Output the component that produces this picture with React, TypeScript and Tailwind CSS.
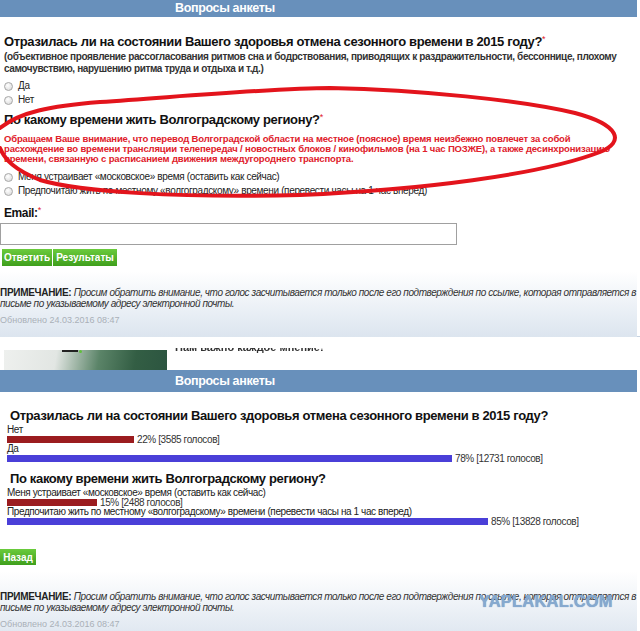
import React from 'react';

const red = 'text-[#e0202a]';

const Radio = ({ label }: { label: string }) => (
  <div className="flex items-center h-[14px] text-[10px] tracking-[-0.35px] leading-[14px] text-[#222]">
    <span className="ml-[4px] mr-[5px] w-[9px] h-[9px] rounded-full border border-[#a8a8a8] bg-[radial-gradient(circle_at_40%_35%,#ffffff_0%,#e2e2e2_70%,#cfcfcf_100%)]" />
    <span>{label}</span>
  </div>
);

const Bar = ({ pct, votes, color, width }: { pct: number; votes: number; color: string; width: number }) => (
  <div className="flex items-center h-[7px] mt-[1px]">
    <div className={`h-[7px] ml-[7px] ${color}`} style={{ width }} />
    <span className="ml-[3px] text-[10px] tracking-[-0.4px] leading-none text-[#333]">
      {pct}% [{votes} голосов]
    </span>
  </div>
);

const ResultOption = ({ label, ...bar }: { label: string; pct: number; votes: number; color: string; width: number }) => (
  <div className="mt-[1px]">
    <div className="pl-[7px] text-[10px] tracking-[-0.4px] leading-[10px] text-[#222]">{label}</div>
    <Bar {...bar} />
  </div>
);

const Header = ({ h }: { h: string }) => (
  <div className={`w-[637px] ${h} bg-[#6890bb] flex items-center pl-[175px] text-white font-bold text-[12.5px] tracking-[-0.35px]`}>
    Вопросы анкеты
  </div>
);

const Note = ({ top }: { top: string }) => (
  <div className={`w-[637px] bg-gradient-to-b from-white to-[#dce5ef] ${top}`}>
    <p className="w-[640px] text-[10px] leading-[10.5px] tracking-[-0.42px] text-[#333] italic">
      <b className="not-italic text-[#222] tracking-[-0.3px]">ПРИМЕЧАНИЕ:</b> Просим обратить внимание, что голос
      засчитывается только после его подтверждения по ссылке, которая отправляется в письме по указываемому адресу
      электронной почты.
    </p>
    <p className="mt-[5px] text-[9px] leading-[12px] text-[#aab0b8] pb-[11px]">Обновлено 24.03.2016 08:47</p>
  </div>
);

const Title = ({ children, cls }: { children: React.ReactNode; cls: string }) => (
  <h2 className={`${cls} text-[13px] leading-[16px] tracking-[-0.35px] font-bold text-[#111]`}>{children}</h2>
);

const Star = () => <sup className="text-[#e0202a] text-[9px] font-normal">*</sup>;

export default function App() {
  return (
    <div className="relative w-[640px] h-[631px] overflow-hidden bg-white font-['Liberation_Sans',Arial,sans-serif]">
      {/* poll form */}
      <section className="relative h-[337px] border-b border-[#c5d2e1]">
        <Header h="h-[17px]" />
        <Title cls="mt-[17px] pl-[4px]">
          Отразилась ли на состоянии Вашего здоровья отмена сезонного времени в 2015 году?
          <Star />
        </Title>
        <p className="mt-[1px] pl-[4px] text-[10px] leading-[12px] tracking-[-0.38px] font-bold text-[#333]">
          (объективное проявление рассогласования ритмов сна и бодрствования, приводящих к раздражительности, бессоннице,
          плохому самочувствию, нарушению ритма труда и отдыха и т.д.)
        </p>
        <div className="mt-[4px]">
          <Radio label="Да" />
          <Radio label="Нет" />
        </div>
        <Title cls="mt-[5px] pl-[4px]">
          По какому времени жить Волгоградскому региону?
          <Star />
        </Title>
        <p className={`mt-[6px] pl-[4px] w-[622px] text-[9.5px] leading-[10px] tracking-[-0.15px] font-bold ${red}`}>
          Обращаем Ваше внимание, что перевод Волгоградской области на местное (поясное) время неизбежно повлечет за собой
          расхождение во времени трансляции телепередач / новостных блоков / кинофильмов (на 1 час ПОЗЖЕ), а также
          десинхронизацию времени, связанную с расписанием движения междугороднего транспорта.
        </p>
        <div className="mt-[6px]">
          <Radio label="Меня устраивает «московское» время (оставить как сейчас)" />
          <Radio label="Предпочитаю жить по местному «волгоградскому» времени (перевести часы на 1 час вперед)" />
        </div>
        <div className="mt-[8px] pl-[4px] text-[12px] leading-[14px] tracking-[-0.4px] font-bold text-[#111]">
          Email:<Star />
        </div>
        <input className="mt-[3px] block w-[457px] h-[22px] border border-[#a0a0a0] bg-white" />
        <div className="mt-[4px] ml-[2px] flex gap-[1px]">
          <button className="w-[50px] h-[17px] bg-gradient-to-b from-[#6acb3c] to-[#3f9f1c] text-white text-[10px] font-bold">
            Ответить
          </button>
          <button className="w-[64px] h-[17px] bg-gradient-to-b from-[#6acb3c] to-[#3f9f1c] text-white text-[10px] font-bold">
            Результаты
          </button>
        </div>
        <Note top="mt-[5px] pt-[17px]" />

        {/* hand-drawn marker loop */}
        <svg className="absolute inset-0 pointer-events-none" width="640" height="337">
          <path
            d="M 0 128 C 20 112, 50 106, 100 102 C 200 95, 280 88, 330 88 C 420 90, 520 100, 575 113 C 620 125, 625 142, 600 152 C 540 175, 420 190, 300 195 C 180 198, 80 192, 40 180 C 15 170, 5 160, 0 148"
            fill="none"
            stroke="#e3141c"
            strokeWidth="4"
            strokeLinecap="round"
          />
        </svg>
      </section>

      {/* strip of the page above */}
      <div className="h-[33px] flex">
        <div className="ml-[4px] mt-[13px] w-[163px] h-[20px] relative bg-[linear-gradient(100deg,#eef0ee_0%,#e2e6e3_32%,#5b8468_58%,#335e44_80%,#2c5540_100%)]">
          <div className="absolute left-[58px] top-0 w-[16px] h-[2px] bg-[#222]" />
          <div className="absolute left-[75px] top-0 w-[3px] h-[3px] rounded-full bg-[#5fbf3a]" />
        </div>
        <div className="ml-[8px] mt-[11px] h-[5px] overflow-hidden">
          <div className="-mt-[6px] text-[11px] leading-[11px] font-bold text-[#333] blur-[0.4px]">Нам важно каждое мнение!</div>
        </div>
      </div>

      {/* poll results */}
      <section>
        <Header h="h-[22px]" />
        <Title cls="mt-[16px] pl-[10px]">
          Отразилась ли на состоянии Вашего здоровья отмена сезонного времени в 2015 году?
        </Title>
        <div className="mt-[1px]">
          <ResultOption label="Нет" pct={22} votes={3585} color="bg-[#9b1c1f]" width={127} />
          <ResultOption label="Да" pct={78} votes={12731} color="bg-[#4a3fd8]" width={445} />
        </div>
        <Title cls="mt-[9px] pl-[10px]">По какому времени жить Волгоградскому региону?</Title>
        <div>
          <ResultOption
            label="Меня устраивает «московское» время (оставить как сейчас)"
            pct={15}
            votes={2488}
            color="bg-[#9b1c1f]"
            width={90}
          />
          <ResultOption
            label="Предпочитаю жить по местному «волгоградскому» времени (перевести часы на 1 час вперед)"
            pct={85}
            votes={13828}
            color="bg-[#4a3fd8]"
            width={481}
          />
        </div>
        <button className="mt-[24px] block w-[36px] h-[16px] bg-gradient-to-b from-[#6acb3c] to-[#3f9f1c] text-white text-[10px] font-bold">
          Назад
        </button>
        <Note top="mt-[6px] pt-[21px]" />
      </section>

      <div className="absolute left-[479px] top-[593px] text-[16.5px] leading-[16px] font-bold tracking-[0.2px] text-[#86a9cf] [text-shadow:0_0_1px_#6f95c0]">
        YAPLAKAL.COM
      </div>
    </div>
  );
}
